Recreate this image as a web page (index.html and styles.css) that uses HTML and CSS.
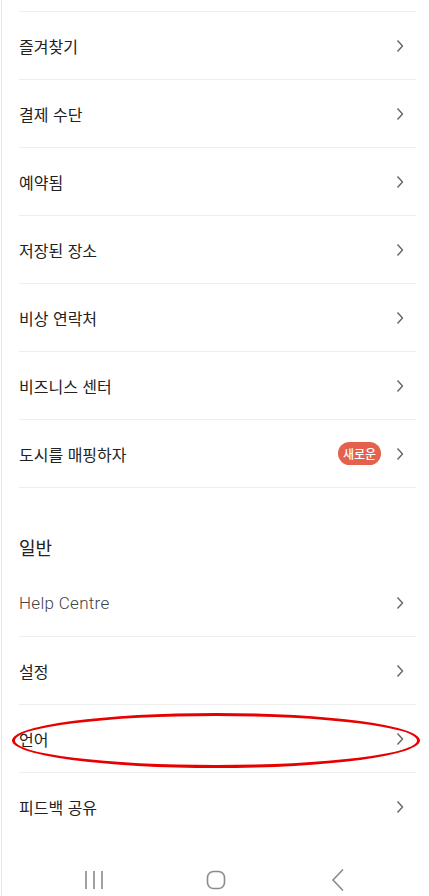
FILE: index.html
```html
<!DOCTYPE html>
<html lang="ko">
<head>
  <meta charset="UTF-8" />
  <meta name="viewport" content="width=device-width,initial-scale=1.0" />
  <title>계정</title>
  <link rel="stylesheet" href="styles.css">
</head>
<body>
  <div class="page">
    <div class="list">
      <div class="top-edge"></div>

      <div class="row"><span class="label">즐겨찾기</span><span class="chev"><svg width="8" height="14" viewBox="0 0 8 14"><path d="M1.5 1.5 L6.5 7 L1.5 12.5" /></svg></span></div>
      <div class="row"><span class="label">결제 수단</span><span class="chev"><svg width="8" height="14" viewBox="0 0 8 14"><path d="M1.5 1.5 L6.5 7 L1.5 12.5" /></svg></span></div>
      <div class="row"><span class="label">예약됨</span><span class="chev"><svg width="8" height="14" viewBox="0 0 8 14"><path d="M1.5 1.5 L6.5 7 L1.5 12.5" /></svg></span></div>
      <div class="row"><span class="label">저장된 장소</span><span class="chev"><svg width="8" height="14" viewBox="0 0 8 14"><path d="M1.5 1.5 L6.5 7 L1.5 12.5" /></svg></span></div>
      <div class="row"><span class="label">비상 연락처</span><span class="chev"><svg width="8" height="14" viewBox="0 0 8 14"><path d="M1.5 1.5 L6.5 7 L1.5 12.5" /></svg></span></div>
      <div class="row"><span class="label">비즈니스 센터</span><span class="chev"><svg width="8" height="14" viewBox="0 0 8 14"><path d="M1.5 1.5 L6.5 7 L1.5 12.5" /></svg></span></div>
      <div class="row">
        <span class="label">도시를 매핑하자</span>
        <span class="badge">새로운</span>
        <span class="chev"><svg width="8" height="14" viewBox="0 0 8 14"><path d="M1.5 1.5 L6.5 7 L1.5 12.5" /></svg></span>
      </div>

      <div class="section-title">일반</div>

      <div class="row"><span class="label latin">Help Centre</span><span class="chev"><svg width="8" height="14" viewBox="0 0 8 14"><path d="M1.5 1.5 L6.5 7 L1.5 12.5" /></svg></span></div>
      <div class="row"><span class="label">설정</span><span class="chev"><svg width="8" height="14" viewBox="0 0 8 14"><path d="M1.5 1.5 L6.5 7 L1.5 12.5" /></svg></span></div>
      <div class="row marked">
        <span class="label">언어</span>
        <span class="chev"><svg width="8" height="14" viewBox="0 0 8 14"><path d="M1.5 1.5 L6.5 7 L1.5 12.5" /></svg></span>
        <div class="highlight"></div>
      </div>
      <div class="row last"><span class="label">피드백 공유</span><span class="chev"><svg width="8" height="14" viewBox="0 0 8 14"><path d="M1.5 1.5 L6.5 7 L1.5 12.5" /></svg></span></div>
    </div>

    <div class="navbar">
      <span class="nav-icon">
        <svg width="20" height="20" viewBox="0 0 20 20"><path d="M2 1 V19 M10 1 V19 M18 1 V19" /></svg>
      </span>
      <span class="nav-icon">
        <svg width="20" height="20" viewBox="0 0 20 20"><rect x="1.5" y="1.5" width="17" height="17" rx="6" /></svg>
      </span>
      <span class="nav-icon">
        <svg width="14" height="24" viewBox="0 0 14 24"><path d="M12 1.5 L2 12 L12 22.5" /></svg>
      </span>
    </div>
  </div>
</body>
</html>
```

FILE: styles.css
```css
* { box-sizing: border-box; margin: 0; padding: 0; }
html, body {
  width: 100%;
  height: 100%;
  background: #fff;
  font-family: "Noto Sans CJK KR", "Noto Sans", sans-serif;
  color: #222;
  overflow: hidden;
}
.page {
  height: 896px;
  margin-left: 1px;
  border-left: 1px solid #e9e9e9;
  display: flex;
  flex-direction: column;
}
.list { flex: 1; margin: 0 13px 0 17px; }
.top-edge { height: 12px; border-bottom: 1px solid #ededed; }
.row {
  position: relative;
  height: 68px;
  display: flex;
  align-items: center;
  padding-right: 12px;
  border-bottom: 1px solid #ededed;
}
.row.last { border-bottom: none; }
.label { flex: 1; font-size: 16px; line-height: 22px; color: #222; }
.label.latin {
  font-family: Roboto, "Noto Sans", sans-serif;
  font-weight: 300;
  color: #444;
  font-size: 17px;
  letter-spacing: 0.3px;
}
.chev { display: flex; width: 8px; height: 14px; }
.chev svg path { fill: none; stroke: #666; stroke-width: 1.4; }
.badge {
  margin-right: 15px;
  height: 23px;
  padding: 0 5px;
  border-radius: 12px;
  background: #e5604d;
  color: #fff;
  font-size: 12px;
  font-weight: 500;
  line-height: 23px;
}
.section-title {
  height: 81px;
  padding-top: 47px;
  font-size: 18px;
  line-height: 24px;
  font-weight: 400;
  color: #222;
}
.highlight {
  position: absolute;
  left: -7px;
  top: 8px;
  width: 408px;
  height: 55px;
  border: 3px solid #e80000;
  border-radius: 50%;
}
.navbar {
  height: 32px;
  display: flex;
  justify-content: center;
  align-items: center;
  gap: 82px;
}
.nav-icon { width: 40px; display: flex; justify-content: center; }
.nav-icon svg path, .nav-icon svg rect { fill: none; stroke: #8a8a8a; stroke-width: 1.6; }
```
